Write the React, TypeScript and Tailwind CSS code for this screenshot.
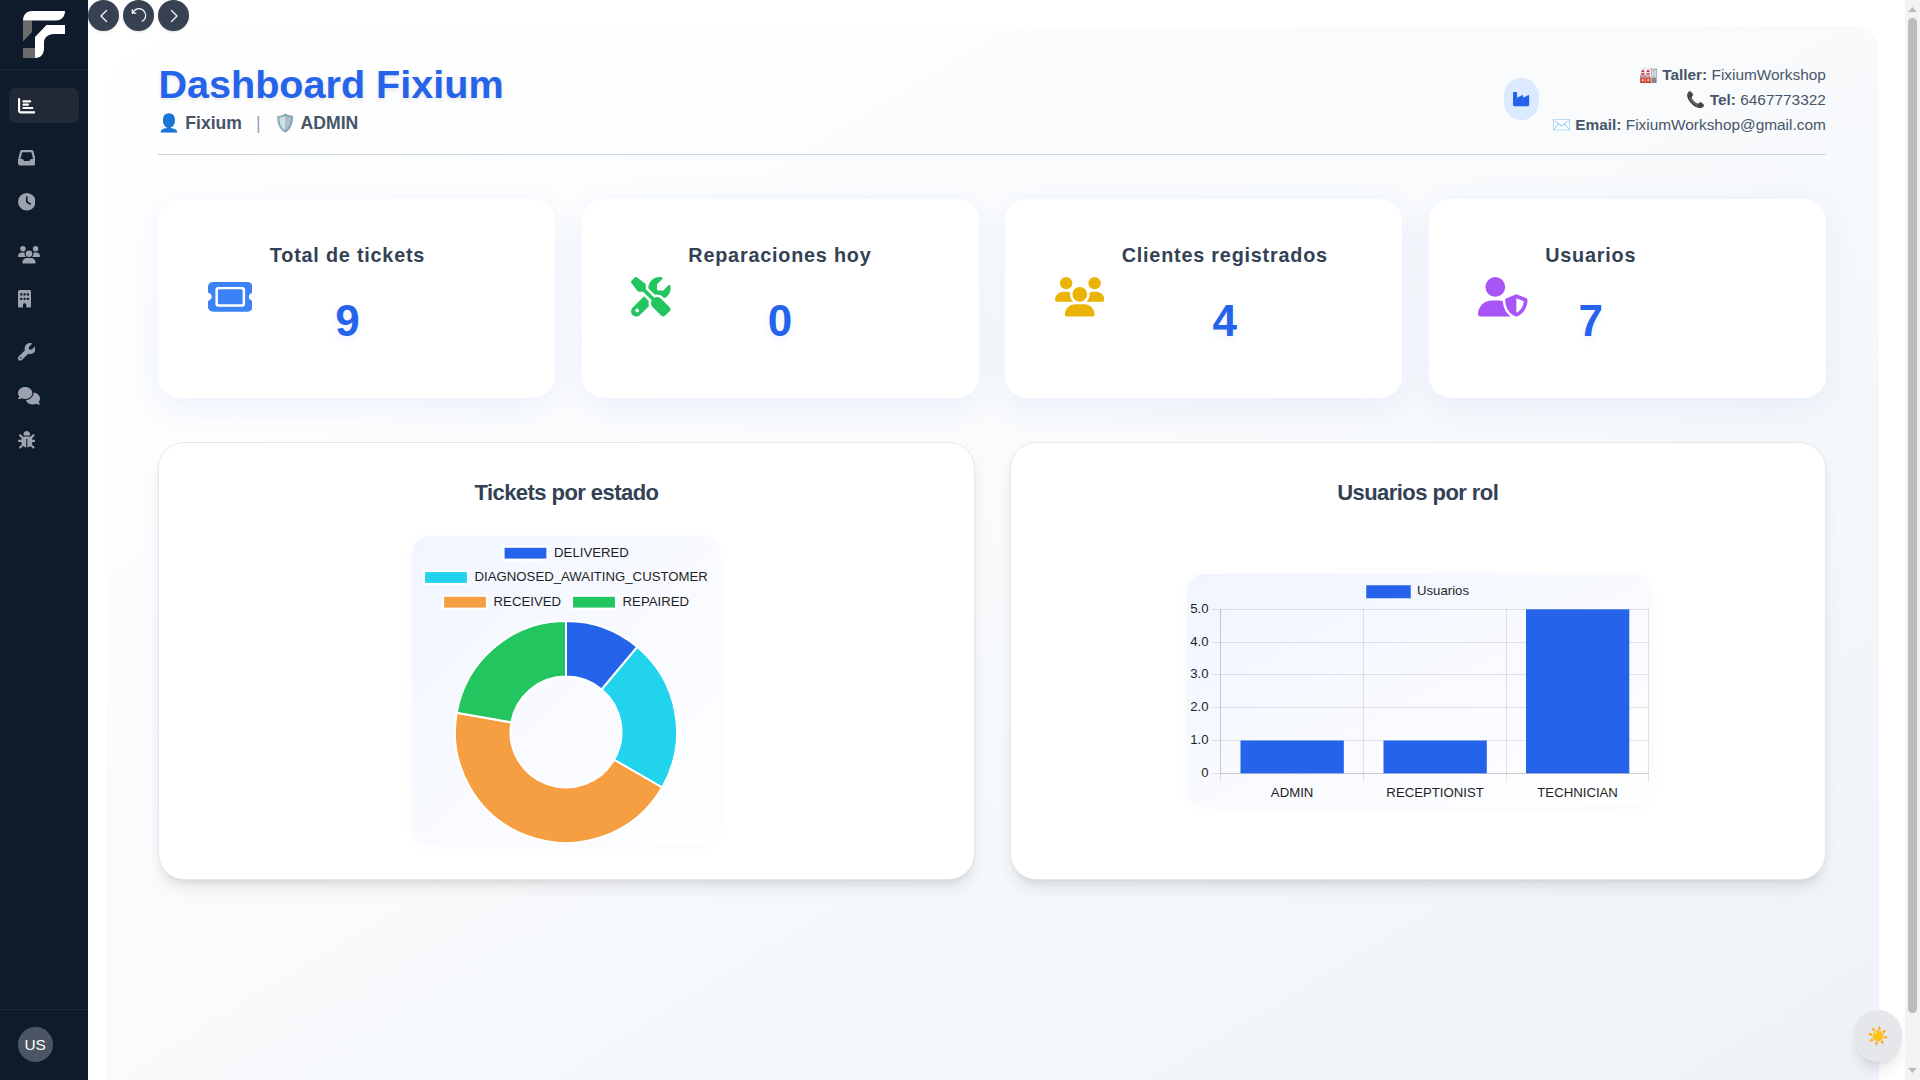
import React from "react";
import {
  FaBug,
  FaBuilding,
  FaChartBar,
  FaClock,
  FaComments,
  FaInbox,
  FaIndustry,
  FaScrewdriverWrench,
  FaTicket,
  FaUserShield,
  FaUsers,
  FaWrench,
} from "react-icons/fa6";
import type { IconType } from "react-icons";

const navGroups: { icon: IconType; size: string; active?: boolean }[][] = [
  [{ icon: FaChartBar, size: "h-[17.6px] w-[17.6px]", active: true }],
  [
    { icon: FaInbox, size: "h-[17.6px] w-[17.6px]" },
    { icon: FaClock, size: "h-[17.6px] w-[17.6px]" },
  ],
  [
    { icon: FaUsers, size: "h-[17.6px] w-[22px]" },
    { icon: FaBuilding, size: "h-[17.6px] w-[13.2px]" },
  ],
  [
    { icon: FaWrench, size: "h-[17.6px] w-[17.6px]" },
    { icon: FaComments, size: "h-[17.6px] w-[22px]" },
    { icon: FaBug, size: "h-[17.6px] w-[17.6px]" },
  ],
];

const stats: { label: string; value: number; icon: IconType; style: string }[] = [
  { label: "Total de tickets", value: 9, icon: FaTicket, style: "w-[44.55px] text-[#3b82f6]" },
  { label: "Reparaciones hoy", value: 0, icon: FaScrewdriverWrench, style: "w-[39.6px] text-[#22c55e]" },
  { label: "Clientes registrados", value: 4, icon: FaUsers, style: "w-[49.5px] text-[#eab308]" },
  { label: "Usuarios", value: 7, icon: FaUserShield, style: "w-[49.5px] text-[#a855f7]" },
];

function Logo() {
  return (
    <svg width="42" height="47" viewBox="0 0 42 47">
      <path d="M0 9.5H9V21L0 30.5Z" fill="#6b6b6b" />
      <path d="M0 37H12V47H0Z" fill="#6b6b6b" />
      <path d="M0 9.5C0 4 3.5 0 9 0H42C42 5.5 38.5 9.5 33 9.5Z" fill="#fff" />
      <path d="M42 14V23H31C25 23 21 26.5 21 32V37C21 43 18 47 12 47V26L23.5 14Z" fill="#fff" />
    </svg>
  );
}

function Sidebar() {
  return (
    <aside className="flex h-full w-[88px] shrink-0 flex-col bg-[#0d1b2a]">
      <div className="flex h-[70px] justify-center border-b border-[#1f2937] pt-[11px]">
        <Logo />
      </div>
      <nav className="flex flex-1 flex-col gap-[17.6px] px-[8.8px] pt-[17.9px]">
        {navGroups.map((group, i) => (
          <div key={i} className="flex flex-col gap-[8.8px]">
            {group.map(({ icon: Icon, size, active }, j) => (
              <a
                key={j}
                className={
                  active
                    ? "flex h-[35.2px] items-center rounded-[6.6px] bg-[#212936] pl-[8.8px] text-white"
                    : "flex h-[35.2px] items-center rounded-[6.6px] pl-[8.8px] text-[#9ca3af]"
                }
              >
                <Icon className={size} />
              </a>
            ))}
          </div>
        ))}
      </nav>
      <div className="flex h-[71px] items-start border-t border-[#1f2937] pt-[17px] pl-[17.6px]">
        <div className="flex size-[35.2px] items-center justify-center rounded-full bg-[#4b5563] text-[15.4px] text-white">
          US
        </div>
      </div>
    </aside>
  );
}

function HistoryButtons() {
  const button =
    "flex size-[31px] items-center justify-center rounded-full bg-[#374151] text-white shadow-sm";
  return (
    <div className="absolute top-0 left-0 z-10 flex gap-[4px]">
      <button className={button}>
        <svg width="16" height="16" viewBox="0 0 16 16" fill="none" stroke="currentColor" strokeWidth="1.2" strokeLinecap="round" strokeLinejoin="round">
          <path d="M10.5 2.5L5 8l5.5 5.5" />
        </svg>
      </button>
      <button className={button}>
        <svg width="16" height="16" viewBox="0 0 16 16" fill="none" stroke="currentColor" strokeWidth="1.2" strokeLinecap="round" strokeLinejoin="round">
          <path d="M1.3 1.7V5.2H4.8" />
          <path d="M1.8 4.8A6.7 6.7 0 1 1 11.2 13.3" />
        </svg>
      </button>
      <button className={button}>
        <svg width="16" height="16" viewBox="0 0 16 16" fill="none" stroke="currentColor" strokeWidth="1.2" strokeLinecap="round" strokeLinejoin="round">
          <path d="M5.5 2.5L11 8l-5.5 5.5" />
        </svg>
      </button>
    </div>
  );
}

function Header() {
  return (
    <header className="flex h-[92.6px] items-start justify-between border-b border-[#cbd5e1]">
      <div>
        <h1 className="text-[39.6px] leading-[44px] font-bold text-[#2563eb] [text-shadow:0_2px_4px_rgba(0,0,0,0.1)]">
          Dashboard Fixium
        </h1>
        <p className="mt-[4px] flex text-[17.6px] leading-[26.4px] font-semibold text-[#475569]">
          <span>👤 Fixium</span>
          <span className="mx-[13.9px] font-normal text-[#94a3b8]">|</span>
          <span>🛡️ ADMIN</span>
        </p>
      </div>
      <div className="flex items-center gap-[13.2px]">
        <div className="mb-[2px] flex h-[42px] w-[35.2px] items-center justify-center rounded-full bg-[#dbeafe] text-[#2563eb]">
          <FaIndustry className="h-[16.2px] w-[18.2px]" />
        </div>
        <div className="text-right text-[15.4px] leading-[25px] text-[#475569]">
          <p>🏭 <b>Taller:</b> FixiumWorkshop</p>
          <p>📞 <b>Tel:</b> 6467773322</p>
          <p>✉️ <b>Email:</b> FixiumWorkshop@gmail.com</p>
        </div>
      </div>
    </header>
  );
}

function StatCards() {
  return (
    <section className="mt-[44px] grid grid-cols-4 gap-[26.4px]">
      {stats.map(({ label, value, icon: Icon, style }) => (
        <article
          key={label}
          className="flex h-[199px] items-start gap-[17.6px] rounded-[22px] bg-white pl-[49.3px] shadow-[0_8px_32px_rgba(37,99,235,0.08)]"
        >
          <Icon className={`mt-[78px] h-[39.6px] shrink-0 ${style}`} />
          <div className="mt-[42px] text-center">
            <h2 className="text-[19.8px] leading-[28px] font-bold tracking-[0.8px] text-[#334155]">{label}</h2>
            <p className="mt-[30px] text-[44px] leading-[44px] font-bold text-[#2563eb] [text-shadow:0_4px_8px_rgba(37,99,235,0.08)]">
              {value}
            </p>
          </div>
        </article>
      ))}
    </section>
  );
}

const slices = [
  { label: "DELIVERED", value: 1, color: "#2563eb", x: 91.5, y: 10.7 },
  { label: "DIAGNOSED_AWAITING_CUSTOMER", value: 2, color: "#22d3ee", x: 12, y: 35 },
  { label: "RECEIVED", value: 4, color: "#f59e42", x: 31, y: 59.7 },
  { label: "REPAIRED", value: 2, color: "#22c55e", x: 160, y: 59.7 },
];

function ringPath(start: number, end: number, cx: number, cy: number, outer: number, inner: number) {
  const point = (r: number, t: number) => {
    const a = t * Math.PI * 2 - Math.PI / 2;
    return `${cx + r * Math.cos(a)} ${cy + r * Math.sin(a)}`;
  };
  const large = end - start > 0.5 ? 1 : 0;
  return `M${point(outer, start)}A${outer} ${outer} 0 ${large} 1 ${point(outer, end)}L${point(inner, end)}A${inner} ${inner} 0 ${large} 0 ${point(inner, start)}Z`;
}

function TicketsChart() {
  const total = slices.reduce((sum, s) => sum + s.value, 0);
  let acc = 0;
  return (
    <svg
      width="308"
      height="308"
      viewBox="0 0 308 308"
      className="rounded-[17.6px] bg-linear-to-br from-[#f0f5ff] via-[#f8faff] to-white shadow-[0_2px_12px_rgba(37,99,235,0.04)]"
    >
      {slices.map((s) => (
        <g key={s.label}>
          <rect x={s.x} y={s.y} width="44" height="13" fill={s.color} stroke="#fff" strokeWidth="2.2" />
          <text x={s.x + 50.6} y={s.y + 10.3} fontSize="13.2" fill="#1f1f1f">
            {s.label}
          </text>
        </g>
      ))}
      {slices.map((s) => {
        const start = acc / total;
        acc += s.value;
        return (
          <path
            key={s.label}
            d={ringPath(start, acc / total, 154, 196, 111, 55.5)}
            fill={s.color}
            stroke="#fff"
            strokeWidth="2"
            strokeLinejoin="round"
          />
        );
      })}
    </svg>
  );
}

const roles = [
  { label: "ADMIN", value: 1, x: 53.5 },
  { label: "RECEPTIONIST", value: 1, x: 196.5 },
  { label: "TECHNICIAN", value: 5, x: 339 },
];
const ticks = [
  { label: "5.0", y: 35.5 },
  { label: "4.0", y: 68.5 },
  { label: "3.0", y: 100.5 },
  { label: "2.0", y: 133.5 },
  { label: "1.0", y: 166.5 },
  { label: "0", y: 199.5 },
];

function RolesChart() {
  return (
    <svg
      width="464"
      height="232"
      viewBox="0 0 464 232"
      className="ml-[2px] rounded-[17.6px] bg-linear-to-br from-[#f0f5ff] via-[#f8faff] to-white shadow-[0_2px_12px_rgba(37,99,235,0.04)]"
    >
      <rect x="179.5" y="11.5" width="44" height="12.5" fill="#2563eb" stroke="#2563eb" strokeOpacity="0.5" />
      <text x="230" y="21.3" fontSize="13.2" fill="#1f1f1f">Usuarios</text>
      {ticks.map((t) => (
        <g key={t.label}>
          <path d={`M25 ${t.y}H462`} stroke="#000" strokeOpacity="0.1" />
          <text x="21.6" y={t.y + 3.8} fontSize="13.2" textAnchor="end" fill="#1f1f1f">
            {t.label}
          </text>
        </g>
      ))}
      {[33.5, 176.5, 319.5, 461.5].map((x) => (
        <path key={x} d={`M${x} 35V208`} stroke="#000" strokeOpacity="0.1" />
      ))}
      <path d="M33.5 35V199.5H462" stroke="#000" strokeOpacity="0.1" fill="none" />
      {roles.map((r) => {
        const h = r.value * 32.8;
        return (
          <g key={r.label}>
            <rect x={r.x} y={199.3 - h} width="103.3" height={h} fill="#2563eb" />
            <text x={r.x + 51.6} y="222.7" fontSize="13.2" textAnchor="middle" fill="#1f1f1f">
              {r.label}
            </text>
          </g>
        );
      })}
    </svg>
  );
}

function ChartCard({ title, children }: { title: string; children: React.ReactNode }) {
  return (
    <article className="flex h-[438.2px] flex-col items-center rounded-[26.4px] border border-[#e2e8f0] bg-white px-[35px] pt-[35.2px] shadow-[0_10px_15px_-3px_rgba(0,0,0,0.1),0_4px_6px_-4px_rgba(0,0,0,0.1)]">
      <h2 className="text-[22px] leading-[29px] font-bold tracking-[-0.55px] text-[#334155]">{title}</h2>
      <div className="mt-[28.5px] flex h-[308px] items-center justify-center">{children}</div>
    </article>
  );
}

function Scrollbar() {
  return (
    <div className="flex h-full w-[15px] shrink-0 flex-col items-center justify-between bg-[#f3f3f3] py-[7px]">
      <svg width="9" height="5" viewBox="0 0 9 5">
        <path d="M0 5L4.5 0L9 5Z" fill="#bcbcbc" />
      </svg>
      <div className="mt-[6px] mb-auto h-[995px] w-[9px] rounded-full bg-[#bcbcbc]" />
      <svg width="9" height="5" viewBox="0 0 9 5">
        <path d="M0 0L4.5 5L9 0Z" fill="#bcbcbc" />
      </svg>
    </div>
  );
}

export default function App() {
  return (
    <div className="flex h-[1080px] w-[1920px] overflow-hidden bg-white font-['Liberation_Sans',sans-serif]">
      <Sidebar />
      <main className="relative h-full min-w-0 flex-1 overflow-hidden">
        <HistoryButtons />
        <div className="mt-[26.4px] mr-[26.4px] ml-[17.6px] h-[1080px] rounded-[26.4px] bg-linear-to-br from-white via-[#f8fafc] to-[#eef3f8] px-[52.8px] pt-[36px]">
          <Header />
          <StatCards />
          <section className="mt-[44px] grid grid-cols-2 gap-[35.2px]">
            <ChartCard title="Tickets por estado">
              <TicketsChart />
            </ChartCard>
            <ChartCard title="Usuarios por rol">
              <RolesChart />
            </ChartCard>
          </section>
        </div>
        <button className="absolute right-[3px] bottom-[18px] flex h-[52px] w-[48px] items-center justify-center rounded-full bg-[#e5e7eb] text-[17.6px] shadow-[0_10px_15px_-3px_rgba(0,0,0,0.1),0_4px_6px_-4px_rgba(0,0,0,0.1)]">
          ☀️
        </button>
      </main>
      <Scrollbar />
    </div>
  );
}
